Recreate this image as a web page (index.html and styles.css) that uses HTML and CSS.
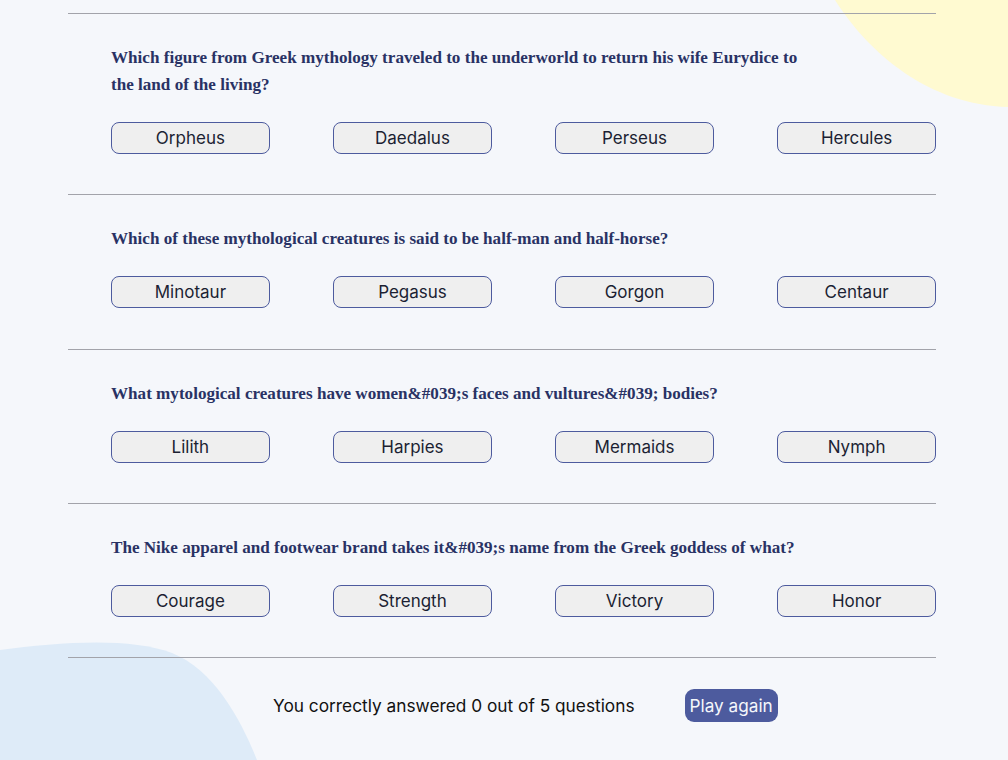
FILE: index.html
```html
<!DOCTYPE html>
<html lang="en">
<head>
<meta charset="utf-8">
<title>Quizzical</title>
<link rel="stylesheet" href="styles.css">
</head>
<body>
<svg class="blob blob-yellow" width="180" height="110" viewBox="828 0 180 110" aria-hidden="true">
  <path d="M835,0 C870,55 930,105 1008,107 L1008,0 Z" fill="#FFFAD1"/>
</svg>
<svg class="blob blob-blue" width="260" height="125" viewBox="0 635 260 125" aria-hidden="true">
  <path d="M0,650 C60,642 130,637 172,653 C214,670 240,718 257,760 L0,760 Z" fill="#DEEBF8"/>
</svg>
<main class="quiz">
  <section class="question">
    <h2 class="question-text">Which figure from Greek mythology traveled to the underworld to return his wife Eurydice to the land of the living?</h2>
    <div class="answers">
      <button class="answer">Orpheus</button>
      <button class="answer">Daedalus</button>
      <button class="answer">Perseus</button>
      <button class="answer">Hercules</button>
    </div>
  </section>
  <section class="question">
    <h2 class="question-text">Which of these mythological creatures is said to be half-man and half-horse?</h2>
    <div class="answers">
      <button class="answer">Minotaur</button>
      <button class="answer">Pegasus</button>
      <button class="answer">Gorgon</button>
      <button class="answer">Centaur</button>
    </div>
  </section>
  <section class="question">
    <h2 class="question-text">What mytological creatures have women&amp;#039;s faces and vultures&amp;#039; bodies?</h2>
    <div class="answers">
      <button class="answer">Lilith</button>
      <button class="answer">Harpies</button>
      <button class="answer">Mermaids</button>
      <button class="answer">Nymph</button>
    </div>
  </section>
  <section class="question">
    <h2 class="question-text">The Nike apparel and footwear brand takes it&amp;#039;s name from the Greek goddess of what?</h2>
    <div class="answers">
      <button class="answer">Courage</button>
      <button class="answer">Strength</button>
      <button class="answer">Victory</button>
      <button class="answer">Honor</button>
    </div>
  </section>
  <footer class="result">
    <p class="score">You correctly answered 0 out of 5 questions</p>
    <button class="play-again">Play again</button>
  </footer>
</main>
</body>
</html>
```

FILE: styles.css
```css
* {
  box-sizing: border-box;
}

html, body {
  margin: 0;
  padding: 0;
}

body {
  background: #F5F7FB;
  height: 760px;
  overflow: hidden;
  position: relative;
  font-family: "Inter", "Liberation Sans", sans-serif;
}

.blob {
  position: absolute;
  display: block;
}

.blob-yellow {
  top: 0;
  right: 0;
}

.blob-blue {
  left: 0;
  bottom: 0;
}

.quiz {
  position: relative;
  width: 868px;
  margin-left: 68px;
  padding-top: 13px;
}

.question {
  border-top: 1px solid #A2A3AA;
  padding: 30px 0 40.33px 43px;
}

.question-text {
  margin: 0;
  max-width: 700px;
  font-family: "Liberation Serif", "Times New Roman", serif;
  font-weight: 700;
  font-size: 17.1px;
  line-height: 27px;
  color: #293264;
}

.answers {
  display: flex;
  gap: 63.33px;
  margin-top: 24px;
}

.answer {
  width: 159px;
  height: 32px;
  padding: 0;
  border: 1px solid #4D5B9E;
  border-radius: 8px;
  background: #EFEFEF;
  font-family: "Inter", "Liberation Sans", sans-serif;
  font-size: 17px;
  color: #1C1F33;
}

.result {
  border-top: 1px solid #A2A3AA;
  display: flex;
  align-items: center;
  gap: 50px;
  padding: 31px 0 0 205px;
}

.score {
  margin: 0;
  font-size: 17.3px;
  color: #111;
}

.play-again {
  height: 33px;
  padding: 0 5px;
  border: none;
  border-radius: 9px;
  background: #4D5B9E;
  color: #F5F7FB;
  font-family: "Inter", "Liberation Sans", sans-serif;
  font-size: 17.2px;
}
```
